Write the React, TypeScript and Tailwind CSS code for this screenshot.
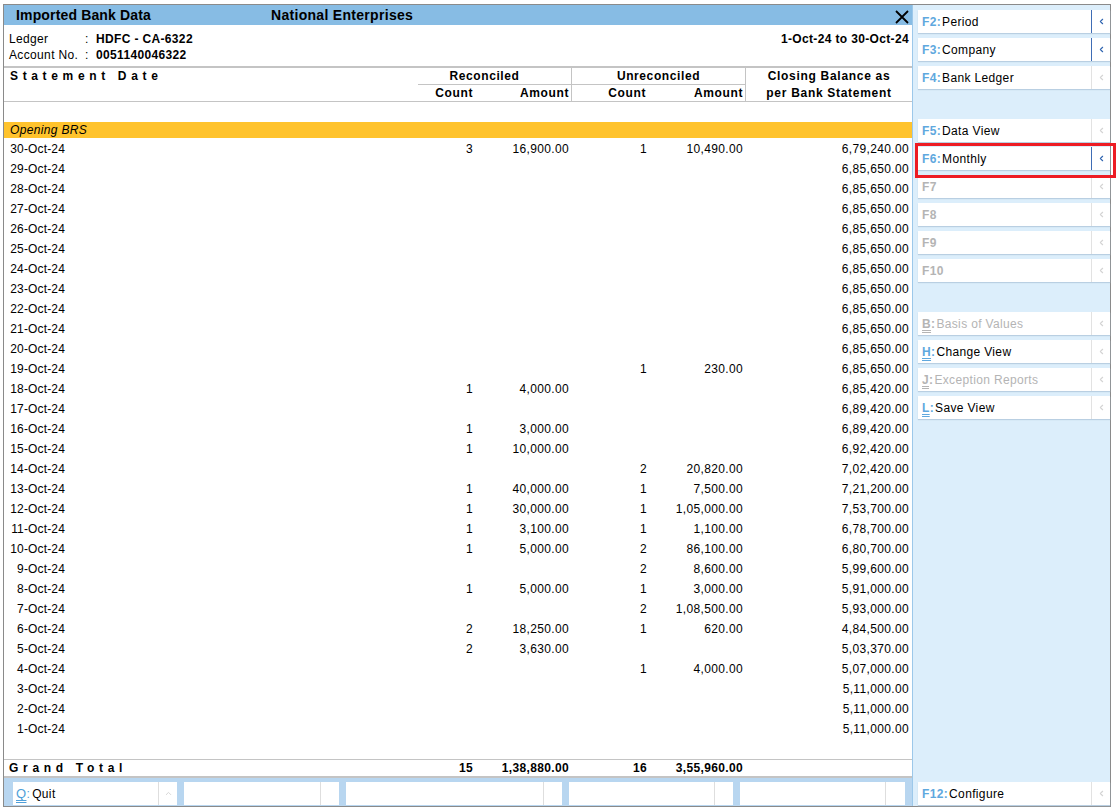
import type { ReactNode } from "react";
import { ChevronLeft, ChevronUp } from "lucide-react";

type Row = { date: string; rc?: string; ra?: string; uc?: string; ua?: string; bal: string };

const rows: Row[] = [
	{ date: "30-Oct-24", rc: "3", ra: "16,900.00", uc: "1", ua: "10,490.00", bal: "6,79,240.00" },
	{ date: "29-Oct-24", bal: "6,85,650.00" },
	{ date: "28-Oct-24", bal: "6,85,650.00" },
	{ date: "27-Oct-24", bal: "6,85,650.00" },
	{ date: "26-Oct-24", bal: "6,85,650.00" },
	{ date: "25-Oct-24", bal: "6,85,650.00" },
	{ date: "24-Oct-24", bal: "6,85,650.00" },
	{ date: "23-Oct-24", bal: "6,85,650.00" },
	{ date: "22-Oct-24", bal: "6,85,650.00" },
	{ date: "21-Oct-24", bal: "6,85,650.00" },
	{ date: "20-Oct-24", bal: "6,85,650.00" },
	{ date: "19-Oct-24", uc: "1", ua: "230.00", bal: "6,85,650.00" },
	{ date: "18-Oct-24", rc: "1", ra: "4,000.00", bal: "6,85,420.00" },
	{ date: "17-Oct-24", bal: "6,89,420.00" },
	{ date: "16-Oct-24", rc: "1", ra: "3,000.00", bal: "6,89,420.00" },
	{ date: "15-Oct-24", rc: "1", ra: "10,000.00", bal: "6,92,420.00" },
	{ date: "14-Oct-24", uc: "2", ua: "20,820.00", bal: "7,02,420.00" },
	{ date: "13-Oct-24", rc: "1", ra: "40,000.00", uc: "1", ua: "7,500.00", bal: "7,21,200.00" },
	{ date: "12-Oct-24", rc: "1", ra: "30,000.00", uc: "1", ua: "1,05,000.00", bal: "7,53,700.00" },
	{ date: "11-Oct-24", rc: "1", ra: "3,100.00", uc: "1", ua: "1,100.00", bal: "6,78,700.00" },
	{ date: "10-Oct-24", rc: "1", ra: "5,000.00", uc: "2", ua: "86,100.00", bal: "6,80,700.00" },
	{ date: "9-Oct-24", uc: "2", ua: "8,600.00", bal: "5,99,600.00" },
	{ date: "8-Oct-24", rc: "1", ra: "5,000.00", uc: "1", ua: "3,000.00", bal: "5,91,000.00" },
	{ date: "7-Oct-24", uc: "2", ua: "1,08,500.00", bal: "5,93,000.00" },
	{ date: "6-Oct-24", rc: "2", ra: "18,250.00", uc: "1", ua: "620.00", bal: "4,84,500.00" },
	{ date: "5-Oct-24", rc: "2", ra: "3,630.00", bal: "5,03,370.00" },
	{ date: "4-Oct-24", uc: "1", ua: "4,000.00", bal: "5,07,000.00" },
	{ date: "3-Oct-24", bal: "5,11,000.00" },
	{ date: "2-Oct-24", bal: "5,11,000.00" },
	{ date: "1-Oct-24", bal: "5,11,000.00" },
];

function SideButton({
	k,
	label,
	active,
	disabled,
	underline,
	className = "",
}: {
	k: string;
	label?: string;
	active?: boolean;
	disabled?: boolean;
	underline?: boolean;
	className?: string;
}) {
	return (
		<div className={`ml-[5px] flex h-[23px] w-[192px] shrink-0 items-center bg-white shadow-[0_1px_1px_#b9cfe2] ${className}`}>
			<div className="flex flex-1 items-center pl-[4px]">
				<span className={`font-bold ${disabled ? "text-[#b4b4b4]" : "text-[#5fa8de]"}`}>
					<span className={underline ? "underline decoration-double underline-offset-2 [text-decoration-skip-ink:none]" : ""}>{k}</span>
					{label ? ":" : ""}
				</span>
				{label && <span className={`ml-[1px] ${disabled ? "text-[#b4b4b4]" : "text-black"}`}>{label}</span>}
			</div>
			<div className={`flex h-full w-[19px] items-center justify-center border-l ${active ? "border-[#3f6db5]" : "border-[#e2e2e2]"}`}>
				<ChevronLeft size={9} strokeWidth={3} className={active ? "text-[#2f64b0]" : "text-[#d4d4d4]"} />
			</div>
		</div>
	);
}

function BottomButton({ width, sep, children, tail }: { width: string; sep: string; children?: ReactNode; tail?: ReactNode }) {
	return (
		<div className={`flex h-[23px] items-center bg-white ${width}`}>
			<div className={`flex h-full items-center border-r border-[#dedede] pl-[3px] ${sep}`}>{children}</div>
			{tail && <div className="flex flex-1 items-center justify-center">{tail}</div>}
		</div>
	);
}

export default function App() {
	return (
		<div className="h-[811px] w-[1117px] overflow-hidden bg-white pl-[3px] pt-1 font-['Liberation_Sans',Arial,sans-serif] text-[12px] leading-none tracking-[0.35px] text-black">
			<div className="relative flex h-[803px] w-[1108px] border border-[#8a8a8a]">
				{/* Main report */}
				<div className="flex w-[908px] flex-col">
					<div className="flex h-5 shrink-0 items-center bg-[#87bce4] text-[14px] font-bold">
						<span className="ml-[12px] w-[255px] tracking-[0.15px]">Imported Bank Data</span>
						<span className="flex-1 tracking-[0.3px]">National Enterprises</span>
						<svg width="14" height="14" viewBox="0 0 14 14" className="mr-[3px] mt-1 text-black">
							<path d="M1 1L13 13M13 1L1 13" stroke="currentColor" strokeWidth="1.8" fill="none" />
						</svg>
					</div>

					<div className="flex h-[43px] shrink-0 flex-col border-b-2 border-[#c4c4c4] pl-[5px] pr-[3px] pt-[6px]">
						<div className="flex h-4 items-center">
							<span className="w-[76px]">Ledger</span>
							<span className="w-[11px]">:</span>
							<span className="font-bold">HDFC - CA-6322</span>
							<span className="ml-auto font-bold">1-Oct-24 to 30-Oct-24</span>
						</div>
						<div className="flex h-4 items-center">
							<span className="w-[76px]">Account No.</span>
							<span className="w-[11px]">:</span>
							<span className="font-bold">0051140046322</span>
						</div>
					</div>

					{/* Column headers */}
					<div className="flex h-[34px] shrink-0 border-b border-[#c4c4c4] font-bold tracking-[0.6px]">
						<div className="w-[414px] pl-[6px] pt-[2px] tracking-[4.65px]">Statement Date</div>
						<div className="flex w-[154px] flex-col border-r border-[#c4c4c4]">
							<div className="flex h-[17px] items-center justify-center border-b border-[#c4c4c4] pr-[20px]">Reconciled</div>
							<div className="flex flex-1 items-center">
								<span className="w-[55px] text-right">Count</span>
								<span className="w-[96px] text-right">Amount</span>
							</div>
						</div>
						<div className="flex w-[174px] flex-col border-r border-[#c4c4c4]">
							<div className="flex h-[17px] items-center justify-center border-b border-[#c4c4c4]">Unreconciled</div>
							<div className="flex flex-1 items-center">
								<span className="w-[74px] text-right">Count</span>
								<span className="w-[97px] text-right">Amount</span>
							</div>
						</div>
						<div className="flex flex-1 flex-col items-center gap-[5px] pt-[2px] tracking-[0.7px]">
							<span>Closing Balance as</span>
							<span>per Bank Statement</span>
						</div>
					</div>

					<div className="h-5 shrink-0" />
					<div className="flex h-4 shrink-0 items-center bg-[#ffc32d] pl-[6px] italic">Opening BRS</div>

					{/* Statement rows */}
					<div className="flex-1">
						{rows.map((r) => (
							<div key={r.date} className="flex h-5 items-center pt-[2px]">
								<span className="w-[61px] text-right tracking-[0.15px]">{r.date}</span>
								<span className="w-[408px] text-right">{r.rc}</span>
								<span className="w-[96px] text-right">{r.ra}</span>
								<span className="w-[78px] text-right">{r.uc}</span>
								<span className="w-[96px] text-right">{r.ua}</span>
								<span className="w-[166px] text-right">{r.bal}</span>
							</div>
						))}
					</div>

					{/* Totals */}
					<div className="flex h-[19px] shrink-0 items-center border-y border-b-2 border-[#c4c4c4] font-bold">
						<span className="flex w-[469px] justify-between pl-[5px]">
							<span className="tracking-[4.7px]">Grand Total</span>
							<span>15</span>
						</span>
						<span className="w-[96px] text-right">1,38,880.00</span>
						<span className="w-[78px] text-right">16</span>
						<span className="w-[96px] text-right">3,55,960.00</span>
					</div>

					{/* Bottom button bar */}
					<div className="flex h-[28px] shrink-0 gap-[7px] bg-[#b8d6f0] pl-[9px] pt-1">
						<BottomButton
							width="w-[164px]"
							sep="w-[146px]"
							tail={<ChevronUp size={9} strokeWidth={2.5} className="text-[#d4d4d4]" />}
						>
							<span className="text-[13px] text-[#4f9fd9] underline decoration-double underline-offset-2 [text-decoration-skip-ink:none]">Q</span>
							<span className="text-[#4f9fd9]">:</span>
							<span className="ml-[2px]">Quit</span>
						</BottomButton>
						<BottomButton width="w-[155px]" sep="w-[137px]" />
						<BottomButton width="w-[216px]" sep="w-[198px]" />
						<BottomButton width="w-[164px]" sep="w-[146px]" />
						<BottomButton width="w-[165px]" sep="w-[146px]" />
					</div>
				</div>

				{/* Right button panel */}
				<div className="flex flex-1 flex-col border-l border-[#9cc8ea] bg-[#dceefb] pt-[5px]">
					<div className="flex flex-col gap-[5px]">
						<SideButton k="F2" label="Period" active />
						<SideButton k="F3" label="Company" active />
						<SideButton k="F4" label="Bank Ledger" />
					</div>
					<div className="mt-[30px] flex flex-col gap-[5px]">
						<SideButton k="F5" label="Data View" />
						<SideButton k="F6" label="Monthly" active />
						<SideButton k="F7" disabled />
						<SideButton k="F8" disabled />
						<SideButton k="F9" disabled />
						<SideButton k="F10" disabled />
					</div>
					<div className="mt-[30px] flex flex-col gap-[5px]">
						<SideButton k="B" label="Basis of Values" disabled underline />
						<SideButton k="H" label="Change View" underline />
						<SideButton k="J" label="Exception Reports" disabled underline />
						<SideButton k="L" label="Save View" underline />
					</div>
					<SideButton k="F12" label="Configure" className="mb-[1px] mt-auto" />
				</div>

				{/* Red highlight around F6 */}
				<div className="absolute left-[911px] top-[138px] h-[35px] w-[201px] border-[3px] border-[#ed1c24]" />
			</div>
		</div>
	);
}
